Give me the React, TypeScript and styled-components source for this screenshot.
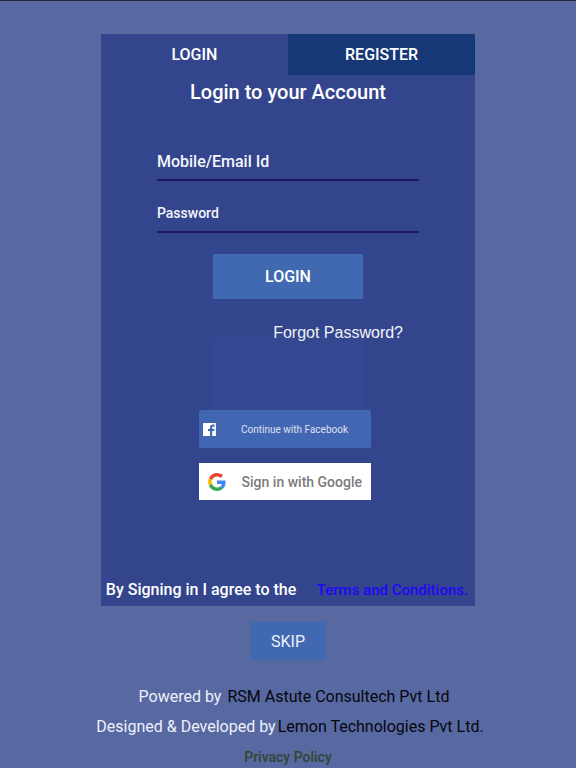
import React from 'react';
import styled, { createGlobalStyle } from 'styled-components';

const GlobalStyle = createGlobalStyle`
  *, *::before, *::after { box-sizing: border-box; }
  body {
    margin: 0;
    background: #5868a1;
    font-family: Roboto, "Noto Sans", sans-serif;
    color: #fff;
  }
  button, input { font: inherit; color: inherit; margin: 0; }
`;

const Page = styled.main`
  min-height: 100vh;
  border-top: 1px solid #1f2536;
  padding-top: 33px;
  display: flex;
  flex-direction: column;
  align-items: center;
`;

const Card = styled.section`
  width: 65%;
  background: #33458c;
  display: flex;
  flex-direction: column;
`;

const Tabs = styled.div`
  display: grid;
  grid-template-columns: 1fr 1fr;
`;

const Tab = styled.button<{ $raised?: boolean }>`
  height: 41px;
  padding: 0;
  border: 0;
  background: ${(p) => (p.$raised ? '#163877' : 'transparent')};
  font-size: 16px;
  font-weight: 500;
  line-height: 24px;
  cursor: pointer;
`;

const Title = styled.h1`
  margin: 3px 0 0;
  font-size: 20px;
  font-weight: 500;
  line-height: 28px;
  text-align: center;
`;

const Form = styled.form`
  width: 70%;
  margin: 37px auto 0;
  display: flex;
  flex-direction: column;
  align-items: center;
`;

const Field = styled.input<{ $small?: boolean }>`
  width: 100%;
  height: 38px;
  margin-bottom: ${(p) => (p.$small ? 21 : 14)}px;
  padding: 0;
  border: 0;
  border-bottom: 2px solid #1c1768;
  border-radius: 0;
  background: transparent;
  font-size: ${(p) => (p.$small ? 14 : 16)}px;
  font-weight: 500;
  outline: 0;
  &::placeholder { color: #f4f6fc; opacity: 1; }
`;

const Submit = styled.button`
  width: 150px;
  height: 45px;
  padding: 0;
  border: 0;
  background: #4169b1;
  font-size: 16px;
  font-weight: 500;
  cursor: pointer;
`;

const Forgot = styled.a`
  align-self: flex-end;
  margin: 22px 16px 0 0;
  color: #f4f6fc;
  font-family: "Liberation Sans", sans-serif;
  font-size: 16px;
  line-height: 24px;
  white-space: nowrap;
  text-decoration: none;
`;

const Social = styled.div`
  position: relative;
  align-self: center;
  width: 172px;
  margin-right: 6px;
  padding-top: 65px;
  display: flex;
  flex-direction: column;
  gap: 15px;
`;

const Toast = styled.div`
  position: absolute;
  top: -10px;
  left: 14px;
  right: 7px;
  height: 100px;
  border-radius: 6px;
  background: rgba(80, 100, 190, 0.09);
  pointer-events: none;
`;

const Facebook = styled.button`
  height: 38px;
  padding: 0 23px 0 4px;
  border: 0;
  border-radius: 2px;
  background: #4267b2;
  color: #e8edf8;
  display: flex;
  align-items: center;
  justify-content: space-between;
  font-family: Roboto, sans-serif;
  font-size: 10px;
  white-space: nowrap;
  cursor: pointer;
`;

const Google = styled.button`
  height: 37px;
  padding: 0 9px;
  border: 0;
  background: #fff;
  color: #7b7b7b;
  display: flex;
  align-items: center;
  justify-content: space-between;
  font-size: 14px;
  font-weight: 500;
  white-space: nowrap;
  cursor: pointer;
`;

const Agreement = styled.p`
  margin: 76px 0 0;
  padding: 0 7px 2px 5px;
  display: flex;
  justify-content: space-between;
  font-size: 16px;
  font-weight: 500;
  line-height: 28px;
  white-space: nowrap;
`;

const Terms = styled.a`
  color: #2108f5;
  font-size: 15px;
  text-decoration: none;
`;

const Skip = styled.button`
  width: 75px;
  height: 38px;
  margin-top: 16px;
  padding: 0;
  border: 0;
  background: #4169b1;
  color: #eef2fa;
  font-size: 16px;
  cursor: pointer;
`;

const Footer = styled.footer`
  margin-top: 22px;
  display: flex;
  flex-direction: column;
  align-items: center;
  font-size: 16px;
  line-height: 30px;
  white-space: nowrap;
`;

const Credit = styled.div<{ $indent: number; $gap: number }>`
  display: flex;
  gap: ${(p) => p.$gap}px;
  padding-left: ${(p) => p.$indent}px;
  color: #eef1fa;
`;

const Company = styled.span`
  color: #05070d;
`;

const Privacy = styled.a`
  height: 24px;
  color: #2f4632;
  font-size: 14px;
  font-weight: 500;
  text-decoration: none;
`;

const FacebookIcon = () => (
  <svg width="13" height="13" viewBox="0 0 26 26" aria-hidden="true">
    <rect width="26" height="26" rx="1" fill="#fff" />
    <path
      fill="#4267b2"
      d="M14 26V16h-4v-4h4V9c0-4 2.4-6 6-6 1.6 0 3 .2 3 .2v3.6h-2c-2 0-2.6 1-2.6 2.4V12H23l-.6 4h-4v10z"
    />
  </svg>
);

const GoogleIcon = () => (
  <svg width="18" height="18" viewBox="0 0 48 48" aria-hidden="true">
    <path fill="#ea4335" d="M24 9.5c3.54 0 6.71 1.22 9.21 3.6l6.85-6.85C35.9 2.38 30.47 0 24 0 14.62 0 6.51 5.38 2.56 13.22l7.98 6.19C12.43 13.72 17.74 9.5 24 9.5z" />
    <path fill="#4285f4" d="M46.98 24.55c0-1.57-.15-3.09-.38-4.55H24v9.02h12.94c-.58 2.96-2.26 5.48-4.78 7.18l7.73 6c4.51-4.18 7.09-10.36 7.09-17.65z" />
    <path fill="#fbbc05" d="M10.53 28.59A14.5 14.5 0 0 1 9.77 24c0-1.6.27-3.14.76-4.59l-7.98-6.19A23.9 23.9 0 0 0 0 24c0 3.87.93 7.53 2.56 10.78z" />
    <path fill="#34a853" d="M24 48c6.48 0 11.93-2.13 15.89-5.81l-7.73-6c-2.15 1.45-4.92 2.3-8.16 2.3-6.26 0-11.57-4.22-13.47-9.91l-7.98 6.19C6.51 42.62 14.62 48 24 48z" />
  </svg>
);

export default function App() {
  return (
    <>
      <GlobalStyle />
      <Page>
        <Card>
          <Tabs role="tablist">
            <Tab type="button" role="tab" aria-selected="true">LOGIN</Tab>
            <Tab type="button" role="tab" aria-selected="false" $raised>REGISTER</Tab>
          </Tabs>
          <Title>Login to your Account</Title>
          <Form onSubmit={(e) => e.preventDefault()}>
            <Field type="text" placeholder="Mobile/Email Id" aria-label="Mobile/Email Id" />
            <Field type="password" placeholder="Password" aria-label="Password" $small />
            <Submit type="submit">LOGIN</Submit>
            <Forgot href="#forgot">Forgot Password?</Forgot>
          </Form>
          <Social>
            <Facebook type="button">
              <FacebookIcon />
              <span>Continue with Facebook</span>
            </Facebook>
            <Google type="button">
              <GoogleIcon />
              <span>Sign in with Google</span>
            </Google>
            <Toast />
          </Social>
          <Agreement>
            <span>By Signing in I agree to the</span>
            <Terms href="#terms">Terms and Conditions.</Terms>
          </Agreement>
        </Card>
        <Skip type="button">SKIP</Skip>
        <Footer>
          <Credit $indent={12} $gap={6}>
            <span>Powered by</span>
            <Company>RSM Astute Consultech Pvt Ltd</Company>
          </Credit>
          <Credit $indent={4} $gap={2}>
            <span>Designed &amp; Developed by</span>
            <Company>Lemon Technologies Pvt Ltd.</Company>
          </Credit>
          <Privacy href="#privacy">Privacy Policy</Privacy>
        </Footer>
      </Page>
    </>
  );
}
